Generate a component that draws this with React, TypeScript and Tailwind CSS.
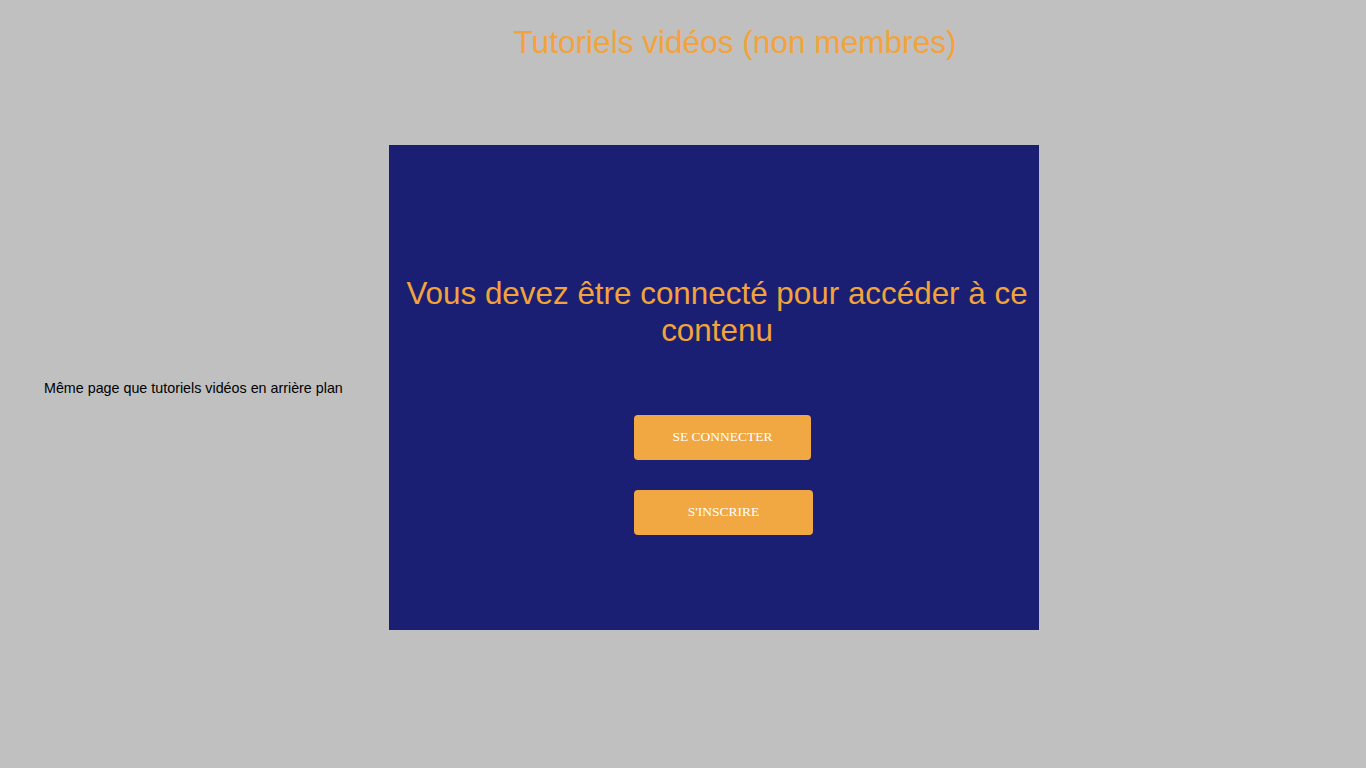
export default function App() {
  return (
    <div className="h-[768px] w-full overflow-hidden bg-[#c0c0c0] font-['Liberation_Sans',Arial,sans-serif]">
      {/* page title */}
      <div className="flex justify-center pl-[104px] pt-[24px]">
        <h1 className="text-[31.6px] leading-[36px] text-[#f2a33b]">Tutoriels vidéos (non membres)</h1>
      </div>

      <div className="mt-[85px] flex items-center">
        <p className="w-[389px] pl-[44px] text-[14.3px] leading-[16px] text-black">
          Même page que tutoriels vidéos en arrière plan
        </p>

        {/* locked overlay */}
        <div className="flex h-[485px] w-[650px] flex-col bg-[#1b1f73] pt-[130px]">
          <p className="pl-[14px] pr-[8px] text-center text-[31.4px] leading-[37px] text-[#f2a33b]">
            Vous devez être connecté pour accéder à ce contenu
          </p>
          <div className="ml-[245px] mt-[66px] flex flex-col items-start gap-[30px]">
            <button className="flex h-[45px] w-[177px] items-center justify-center rounded-[4px] bg-[#f1a742] font-['Liberation_Serif',serif] text-[13.5px] text-white">
              SE CONNECTER
            </button>
            <button className="flex h-[45px] w-[179px] items-center justify-center rounded-[4px] bg-[#f1a742] font-['Liberation_Serif',serif] text-[13.5px] text-white">
              S'INSCRIRE
            </button>
          </div>
        </div>
      </div>
    </div>
  );
}
